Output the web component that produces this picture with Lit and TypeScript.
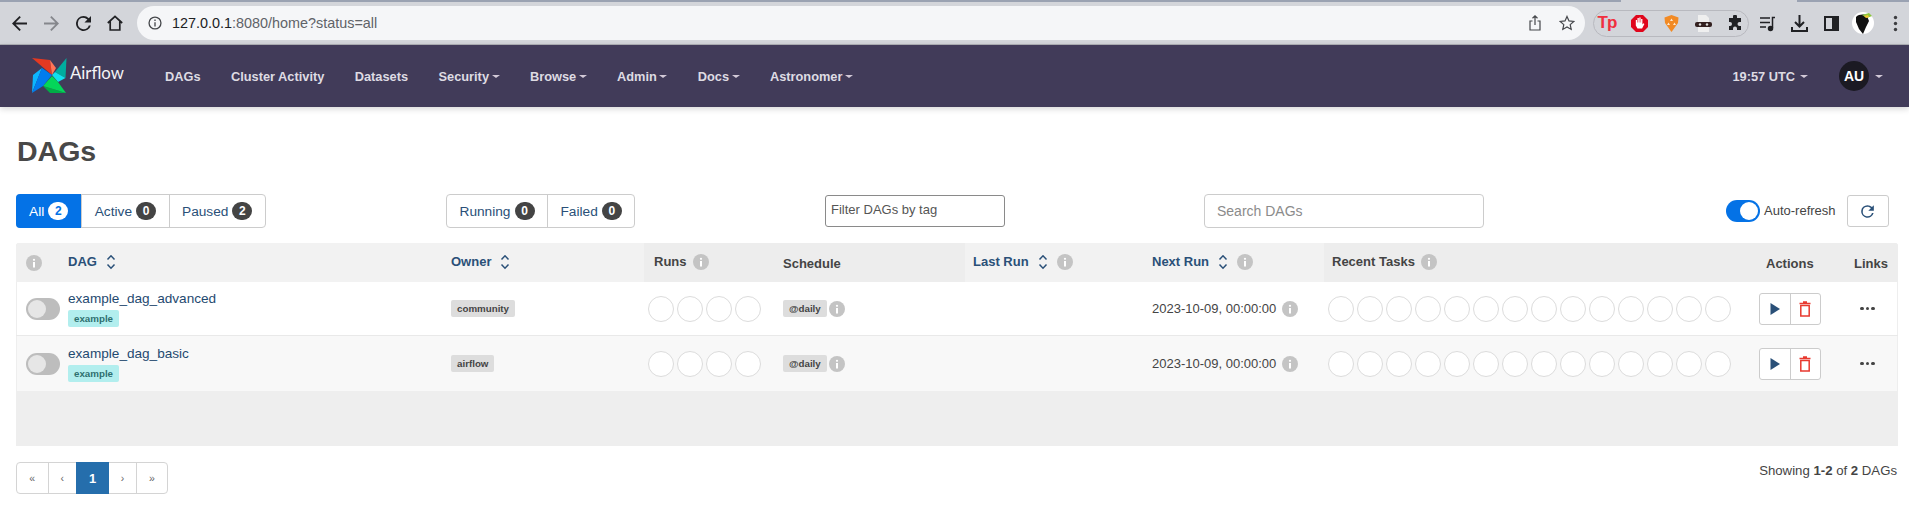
import { LitElement, css, html, svg } from "lit";
import { customElement } from "lit/decorators.js";

const dags = [
  { name: "example_dag_advanced", owner: "community" },
  { name: "example_dag_basic", owner: "airflow" },
];
const navItems = [
  { label: "DAGs" },
  { label: "Cluster Activity" },
  { label: "Datasets" },
  { label: "Security", caret: true },
  { label: "Browse", caret: true },
  { label: "Admin", caret: true },
  { label: "Docs", caret: true },
  { label: "Astronomer", caret: true },
];

const infoIcon = html`<svg class="info" viewBox="0 0 16 16">
  <circle cx="8" cy="8" r="8" fill="#c4c4c4"></circle>
  <rect x="7" y="7" width="2" height="5.5" fill="#fff"></rect>
  <circle cx="8" cy="4.8" r="1.1" fill="#fff"></circle>
</svg>`;

const sortIcon = html`<svg class="sort" viewBox="0 0 10 16">
  <path d="M1.5 5.5 5 1.800 8.500 5.500M1.500 10.500 5 14.200 8.500 10.500" fill="none" stroke="currentColor" stroke-width="1.5"></path>
</svg>`;

const caret = html`<i class="caret"></i>`;

const logo = html`<svg class="logo" viewBox="0 0 36 36">
  ${svg`
  <path d="M1 0 19 2 21 17Z" fill="#e43921"></path>
  <path d="M19 2 25 10 21 17Z" fill="#ff7557"></path>
  <path d="M35.500 0 34.500 20 24 14Z" fill="#00ad9f"></path>
  <path d="M24 14 34.500 20 27 24 21 17Z" fill="#11e1ee"></path>
  <path d="M35 35 19 35 12 28Z" fill="#00ad46"></path>
  <path d="M12 28 21 18 27 24 35 35Z" fill="#04d659"></path>
  <path d="M1 35 2 17 11 10Z" fill="#0cb6ff"></path>
  <path d="M1 35 11 10 21 17 12 28Z" fill="#017cee"></path>
  `}
</svg>`;

@customElement("app-root")
export class AppRoot extends LitElement {
  static styles = css`
    :host {
      display: block;
      font-family: "Liberation Sans", Arial, sans-serif;
      font-size: 13.7px;
      color: #444;
      background: #fff;
      height: 525px;
      overflow: hidden;
    }
    svg {
      display: block;
      flex: none;
    }

    /* browser chrome */
    .tabstrip {
      display: flex;
      height: 2px;
      background: #d3d5da;
    }
    .tabstrip span {
      background: #9aa2b2;
    }
    .tabstrip .left {
      width: 1621px;
    }
    .tabstrip .right {
      margin-left: auto;
      width: 112px;
    }
    .toolbar {
      display: flex;
      align-items: center;
      height: 42px;
      padding-left: 3px;
      background: #d3d5da;
      border-bottom: 1px solid #aeb0b5;
      overflow: hidden;
    }
    .slot {
      display: flex;
      flex: none;
      align-items: center;
      justify-content: center;
      width: 32px;
      color: #202124;
    }
    .slot.dim {
      color: #85878c;
    }
    .slot > svg {
      width: 16px;
      height: 16px;
    }
    .slot > svg.arrow {
      width: 15px;
      height: 15px;
    }
    .omnibox {
      display: flex;
      flex: none;
      align-items: center;
      width: 1448px;
      height: 34px;
      margin-left: 6px;
      padding: 0 2px 0 11px;
      box-sizing: border-box;
      border-radius: 17px;
      background: #f5f6f8;
      font-size: 14.4px;
      color: #5f6368;
    }
    .omnibox b {
      font-weight: 400;
      color: #202124;
    }
    .omnibox .site {
      width: 14px;
      height: 14px;
      margin-right: 10px;
    }
    .omnibox .url {
      flex: 1;
    }
    .omnibox .slot {
      color: #45474b;
    }
    .extensions {
      display: flex;
      flex: none;
      align-items: center;
      justify-content: center;
      width: 156px;
      height: 27px;
      margin-left: 8px;
      box-sizing: border-box;
      border: 1px solid #b8b9bf;
      border-radius: 14px;
    }
    .extensions .slot > svg {
      width: 17px;
      height: 17px;
    }
    .tp {
      font-size: 17px;
      font-weight: 700;
      letter-spacing: -1px;
      color: #f0303f;
    }
    .tray {
      display: flex;
      flex: none;
      margin-left: 2px;
    }
    .tray .slot > svg {
      width: 17px;
      height: 17px;
    }
    .tray .slot > svg.avatar {
      width: 22px;
      height: 22px;
    }

    /* airflow navbar */
    .navbar {
      display: flex;
      align-items: center;
      height: 62px;
      padding-left: 31px;
      background: #413b59;
      box-shadow: 0 2px 6px rgba(0, 0, 0, 0.16);
      color: #dedbe3;
      position: relative;
    }
    .logo {
      width: 36px;
      height: 36px;
      margin-top: -1px;
    }
    .brand {
      width: 95px;
      margin: -8px 0 0 3px;
      font-family: Lato, sans-serif;
      font-size: 16.8px;
      font-weight: 400;
      color: #f4f4f6;
    }
    .links {
      display: flex;
      gap: 30.4px;
      font-size: 12.8px;
      font-weight: 700;
    }
    .links span {
      display: flex;
      align-items: center;
    }
    .caret {
      width: 0;
      height: 0;
      margin-left: 2.5px;
      margin-top: 1px;
      border-left: 4px solid transparent;
      border-right: 4px solid transparent;
      border-top: 3.5px solid #d3cad8;
    }
    .clock {
      display: flex;
      align-items: center;
      margin-left: auto;
      font-size: 12.8px;
      font-weight: 700;
    }
    .clock .caret {
      margin-left: 5px;
    }
    .account {
      display: flex;
      align-items: center;
      margin: 0 26px 0 31px;
    }
    .account .caret {
      margin-left: 6px;
    }
    .avatar-au {
      display: flex;
      align-items: center;
      justify-content: center;
      width: 30px;
      height: 30px;
      border-radius: 50%;
      background: #1b1a23;
      color: #fff;
      font-size: 14px;
      font-weight: 700;
    }

    /* page */
    main {
      padding: 0 11px 0 16px;
    }
    h1 {
      margin: 0;
      padding: 27px 0 26px 1px;
      font-size: 28.5px;
      line-height: 34px;
      font-weight: 700;
      color: #484848;
    }
    .controls {
      display: grid;
      grid-template-columns: 430px 379px 379px 522px auto;
      align-items: center;
      height: 34px;
      margin-bottom: 15px;
    }
    .btn-group {
      display: flex;
      justify-self: start;
      height: 34px;
      box-sizing: border-box;
      border: 1px solid #ccc;
      border-radius: 4px;
      color: #2a5078;
    }
    .btn-group span {
      display: flex;
      align-items: center;
      gap: 4px;
      padding: 0 12.5px;
      border-left: 1px solid #ccc;
    }
    .btn-group span:first-child {
      border-left: 0;
    }
    .btn-group span.on {
      margin: -1px 0 -1px -1px;
      padding: 0 13px;
      border-radius: 4px 0 0 4px;
      background: #0472e6;
      color: #fff;
    }
    .count {
      min-width: 20px;
      height: 18px;
      line-height: 18px;
      border-radius: 9px;
      background: #444;
      color: #fff;
      text-align: center;
      font-size: 12px;
      font-weight: 700;
    }
    .on .count {
      background: #fff;
      color: #0472e6;
    }
    input {
      display: block;
      box-sizing: border-box;
      font-family: inherit;
      outline: none;
    }
    input.tag-filter {
      width: 180px;
      height: 32px;
      padding: 0 4px 3px 5px;
      border: 1px solid #8a8a8a;
      border-radius: 3px;
      font-size: 13px;
    }
    input.tag-filter::placeholder {
      color: #555;
    }
    input.search {
      width: 280px;
      height: 34px;
      padding: 0 12px;
      border: 1px solid #ccc;
      border-radius: 4px;
      font-size: 14px;
    }
    input.search::placeholder {
      color: #8b8b8b;
    }
    .refresh {
      display: flex;
      align-items: center;
    }
    .switch {
      display: flex;
      justify-content: flex-end;
      align-items: center;
      width: 34px;
      height: 22px;
      padding: 2px;
      box-sizing: border-box;
      border-radius: 11px;
      background: #0472e6;
    }
    .switch i {
      width: 18px;
      height: 18px;
      border-radius: 50%;
      background: #fff;
    }
    .switch.off {
      justify-content: flex-start;
      background: #bdbdbd;
    }
    .switch.off i {
      background: #e6e6e6;
    }
    .refresh label {
      margin: -2px 11px 0 4px;
      font-size: 13px;
      color: #444;
    }
    .refresh-btn {
      display: flex;
      align-items: center;
      justify-content: center;
      width: 42px;
      height: 32px;
      box-sizing: border-box;
      border: 1px solid #ccc;
      border-radius: 3px;
      color: #2a5078;
    }
    .refresh-btn svg {
      width: 19px;
      height: 19px;
    }

    /* table */
    .table {
      background: #eee;
      height: 203px;
      border-radius: 3px 3px 0 0;
      overflow: hidden;
    }
    .row {
      display: grid;
      grid-template-columns: 44px 383px 201px 131px 190px 179px 180px 434px 88px 52px;
    }
    .head {
      height: 39px;
      font-size: 13px;
      font-weight: 700;
      color: #444;
    }
    .head > div {
      display: flex;
      align-items: center;
      gap: 9px;
      padding: 0 0 2px 8px;
      background: #ededed;
    }
    .head > div.sortable {
      background: #f2f2f2;
      color: #2a5078;
    }
    .head > div.lower {
      padding: 2px 0 0 8px;
    }
    .head > div.first {
      justify-content: center;
      padding: 0 8px 0 0;
      background: #f0f0f0;
    }
    .head > div.runs {
      padding-left: 10px;
      gap: 6px;
    }
    .head > div.tasks {
      gap: 6px;
    }
    .sort {
      width: 10px;
      height: 16px;
    }
    .info {
      width: 16px;
      height: 16px;
    }
    .body {
      align-items: center;
      height: 54px;
      box-sizing: border-box;
      background: #fff;
      border-bottom: 1px solid #e9e9e9;
      box-shadow: inset -1px 0 #eee, inset 1px 0 #eee;
    }
    .body.alt {
      height: 55px;
      background: #f8f8f8;
      border-bottom: 0;
    }
    .body > div {
      padding-left: 8px;
    }
    .body > div.toggle {
      padding-left: 10px;
    }
    .name {
      margin-top: 1px;
      color: #1f4a70;
      font-size: 13.6px;
      line-height: 16px;
    }
    .tag {
      display: inline-block;
      height: 17px;
      line-height: 17px;
      padding: 0 6px;
      border-radius: 2px;
      background: #dddddd;
      font-size: 9.75px;
      font-weight: 700;
      color: #444;
    }
    .tag.teal {
      display: table;
      margin-top: 3px;
      background: #b2eeee;
      color: #2f7070;
    }
    .circles {
      display: flex;
      gap: 3px;
    }
    .circles i {
      width: 26px;
      height: 26px;
      box-sizing: border-box;
      border: 1px solid #dcdcdc;
      border-radius: 50%;
      background: #fff;
    }
    .body > div.with-circles {
      padding-left: 4px;
    }
    .inline {
      display: flex;
      align-items: center;
      gap: 2px;
      font-size: 13px;
    }
    .inline.date {
      gap: 6px;
    }
    .body > div.action-cell {
      padding-left: 1px;
    }
    .actions {
      display: flex;
      width: 62px;
      height: 32px;
      box-sizing: border-box;
      border: 1px solid #ccc;
      border-radius: 3px;
      background: #fff;
    }
    .actions span {
      display: flex;
      align-items: center;
      justify-content: center;
      flex: 1;
    }
    .actions span + span {
      border-left: 1px solid #ccc;
    }
    .actions svg {
      width: 16px;
      height: 16px;
    }
    .body > div.dots {
      display: flex;
      gap: 2px;
      padding-left: 14px;
    }
    .dots i {
      width: 3.5px;
      height: 3.5px;
      border-radius: 50%;
      background: #444;
    }

    /* footer */
    .foot {
      display: flex;
      justify-content: space-between;
      margin-top: 16px;
    }
    .pager {
      display: flex;
      height: 32px;
      box-sizing: border-box;
      border: 1px solid #d4d4d4;
      border-radius: 4px;
      color: #666;
      font-size: 10.5px;
    }
    .pager span {
      display: flex;
      align-items: center;
      justify-content: center;
      box-sizing: border-box;
      width: 28.5px;
      border-left: 1px solid #d4d4d4;
    }
    .pager span:first-child {
      width: 30.5px;
      border-left: 0;
    }
    .pager span:last-child {
      width: 31px;
    }
    .pager span.now {
      width: 33px;
      margin: -1px 0;
      border-left: 0;
      background: #256eac;
      color: #fff;
      font-size: 13px;
      font-weight: 700;
    }
    .pager span.now + span {
      width: 27px;
      border-left: 0;
    }
    .showing {
      margin: 1px 1px 0 0;
      font-size: 13.2px;
      line-height: 16px;
      color: #444;
    }
  `;

  circles(count: number) {
    return html`<div class="circles">${Array.from({ length: count }, () => html`<i></i>`)}</div>`;
  }

  renderChrome() {
    return html`
      <div class="tabstrip"><span class="left"></span><span class="right"></span></div>
      <div class="toolbar">
        <span class="slot"><svg class="arrow" viewBox="4 4 16 16" fill="currentColor"><path d="M20 11H7.830l5.590-5.590L12 4l-8 8 8 8 1.410-1.410L7.830 13H20v-2z"></path></svg></span>
        <span class="slot dim"><svg class="arrow" viewBox="4 4 16 16" fill="currentColor"><path d="M4 11h12.170l-5.590-5.590L12 4l8 8-8 8-1.410-1.410L16.170 13H4v-2z"></path></svg></span>
        <span class="slot"><svg class="arrow" viewBox="4 4 16 16" fill="currentColor"><path d="M17.650 6.350A7.950 7.950 0 0 0 12 4a8 8 0 1 0 7.730 10h-2.080A6 6 0 1 1 12 6c1.660 0 3.140.690 4.220 1.780L13 11h7V4l-2.350 2.350z"></path></svg></span>
        <span class="slot"><svg viewBox="0 0 16 16" fill="none" stroke="currentColor" stroke-width="1.700"><path d="M.800 8 8 1.400 15.200 8M3.200 6.400V15h9.600V6.400"></path></svg></span>
        <div class="omnibox">
          <svg class="site" viewBox="0 0 16 16" fill="none" stroke="#45474b" stroke-width="1.500"><circle cx="8" cy="8" r="6.800"></circle><path d="M8 7v5M8 4v1.600"></path></svg>
          <span class="url"><b>127.0.0.1</b>:8080/home?status=all</span>
          <span class="slot"><svg viewBox="0 0 16 16" fill="none" stroke="currentColor" stroke-width="1.200"><path d="M5.500 6H3v9h10V6h-2.500M8 10V1M5.500 3.200 8 .900l2.500 2.300"></path></svg></span>
          <span class="slot"><svg viewBox="0 0 16 16" fill="none" stroke="currentColor" stroke-width="1.200"><path d="m8 1.400 2 4.500 4.800.500-3.600 3.200 1 4.800L8 12l-4.200 2.400 1-4.800L1.200 6.400 6 5.900z"></path></svg></span>
        </div>
        <div class="extensions">
          <span class="slot"><span class="tp">Tp</span></span>
          <span class="slot"><svg viewBox="0 0 17 17"><path d="M5 0h7l5 5v7l-5 5H5l-5-5V5z" fill="#e0061c"></path><path d="M4.800 8V5h1.200v2.500h.5V3h1.300v4.500h.5V2.500h1.300v5h.5V4h1.300v5.500l1-1.200 1 .7-2.300 4.500H6.500L4.800 10.500z" fill="#fff"></path></svg></span>
          <span class="slot"><svg viewBox="0 0 17 17"><path d="M8.500 0 15.500 2.500 15 8 8.500 17 2 8 1.500 2.500z" fill="#f28a24"></path><path d="M8.500 3.500 10 6H7zM5.500 7.500 7 10H4zM11.500 7.500 13 10h-3z" fill="#ffe9cf"></path></svg></span>
          <span class="slot"><svg viewBox="0 0 17 17"><path d="M3 0h8l3 3v14H3z" fill="#efefef"></path><rect x="0" y="7" width="17" height="5" rx="2" fill="#33201f"></rect><circle cx="5" cy="9.500" r="1.200" fill="#ddd"></circle><circle cx="12" cy="9.500" r="1.200" fill="#ddd"></circle></svg></span>
          <span class="slot"><svg viewBox="0 0 17 17" fill="#202124"><path d="M6 1.500a2 2 0 0 1 4 0V3h4v4h-1.500a2 2 0 0 0 0 4H14v4h-4v-1.500a2 2 0 0 0-4 0V15H2v-4h1a2 2 0 0 0 0-4H2V3h4z"></path></svg></span>
        </div>
        <div class="tray">
          <span class="slot"><svg viewBox="0 0 17 17" fill="none" stroke="#202124" stroke-width="1.500"><path d="M1 3h10M1 7.500h10M1 12h6M13.500 13V2.500H16"></path><circle cx="11.500" cy="13.500" r="2" fill="#202124"></circle></svg></span>
          <span class="slot"><svg viewBox="0 0 17 17" fill="none" stroke="#202124" stroke-width="2"><path d="M8.500 0v11M4 7l4.500 4.500L13 7M1 12v4h15v-4"></path></svg></span>
          <span class="slot"><svg viewBox="0 0 17 17" fill="none" stroke="#202124" stroke-width="2"><rect x="2" y="2" width="13" height="13"></rect><rect x="10" y="2" width="5" height="13" fill="#202124"></rect></svg></span>
          <span class="slot"><svg class="avatar" viewBox="0 0 22 22"><circle cx="11" cy="11" r="11" fill="#fff"></circle><path d="M4 5c3-3 9-3 11-1l2 5-3 6-3 7-4-5-3-7z" fill="#111"></path><path d="M10 3l7-2 3 3-5 2z" fill="#8cc63f"></path><path d="M12 4l4-1 1 2-3 1z" fill="#f4c430"></path></svg></span>
          <span class="slot"><svg viewBox="0 0 16 17" fill="#3c3d40"><circle cx="8" cy="2.500" r="1.700"></circle><circle cx="8" cy="8.500" r="1.700"></circle><circle cx="8" cy="14.500" r="1.700"></circle></svg></span>
        </div>
      </div>
    `;
  }

  renderNav() {
    return html`
      <nav class="navbar">
        ${logo}
        <span class="brand">Airflow</span>
        <div class="links">
          ${navItems.map((n) => html`<span>${n.label}${n.caret ? caret : ""}</span>`)}
        </div>
        <span class="clock">19:57 UTC${caret}</span>
        <div class="account"><span class="avatar-au">AU</span>${caret}</div>
      </nav>
    `;
  }

  renderControls() {
    return html`
      <div class="controls">
        <div class="btn-group">
          <span class="on">All <b class="count">2</b></span>
          <span>Active <b class="count">0</b></span>
          <span>Paused <b class="count">2</b></span>
        </div>
        <div class="btn-group">
          <span>Running <b class="count">0</b></span>
          <span>Failed <b class="count">0</b></span>
        </div>
        <input class="tag-filter" placeholder="Filter DAGs by tag" />
        <input class="search" placeholder="Search DAGs" />
        <div class="refresh">
          <div class="switch"><i></i></div>
          <label>Auto-refresh</label>
          <div class="refresh-btn">
            <svg viewBox="0 0 24 24" fill="currentColor"><path d="M17.650 6.350A7.950 7.950 0 0 0 12 4a8 8 0 1 0 7.730 10h-2.080A6 6 0 1 1 12 6c1.660 0 3.140.690 4.220 1.780L13 11h7V4l-2.350 2.350z"></path></svg>
          </div>
        </div>
      </div>
    `;
  }

  renderTable() {
    return html`
      <div class="table">
        <div class="row head">
          <div class="first">${infoIcon}</div>
          <div class="sortable">DAG ${sortIcon}</div>
          <div class="sortable">Owner ${sortIcon}</div>
          <div class="runs">Runs ${infoIcon}</div>
          <div class="lower">Schedule</div>
          <div class="sortable">Last Run ${sortIcon}${infoIcon}</div>
          <div class="sortable">Next Run ${sortIcon}${infoIcon}</div>
          <div class="tasks">Recent Tasks ${infoIcon}</div>
          <div class="lower">Actions</div>
          <div class="lower">Links</div>
        </div>
        ${dags.map(
          (d, i) => html`
            <div class="row body ${i % 2 ? "alt" : ""}">
              <div class="toggle"><div class="switch off"><i></i></div></div>
              <div>
                <div class="name">${d.name}</div>
                <span class="tag teal">example</span>
              </div>
              <div><span class="tag">${d.owner}</span></div>
              <div class="with-circles">${this.circles(4)}</div>
              <div class="inline"><span class="tag">@daily</span>${infoIcon}</div>
              <div></div>
              <div class="inline date">2023-10-09, 00:00:00 ${infoIcon}</div>
              <div class="with-circles">${this.circles(14)}</div>
              <div class="action-cell">
                <div class="actions">
                  <span><svg viewBox="0 0 16 16"><path d="M3.500 2 13 8l-9.500 6z" fill="#2a5078"></path></svg></span>
                  <span><svg viewBox="0 0 16 16" fill="none" stroke="#e8392f" stroke-width="1.500"><path d="M2.500 2.500h11M6 1h4"></path><rect x="3.800" y="4.500" width="8.400" height="10.500"></rect></svg></span>
                </div>
              </div>
              <div class="dots"><i></i><i></i><i></i></div>
            </div>
          `
        )}
      </div>
    `;
  }

  render() {
    return html`
      ${this.renderChrome()} ${this.renderNav()}
      <main>
        <h1>DAGs</h1>
        ${this.renderControls()} ${this.renderTable()}
        <div class="foot">
          <div class="pager">
            <span>«</span><span>‹</span><span class="now">1</span><span>›</span><span>»</span>
          </div>
          <div class="showing">Showing <b>1-2</b> of <b>2</b> DAGs</div>
        </div>
      </main>
    `;
  }
}
